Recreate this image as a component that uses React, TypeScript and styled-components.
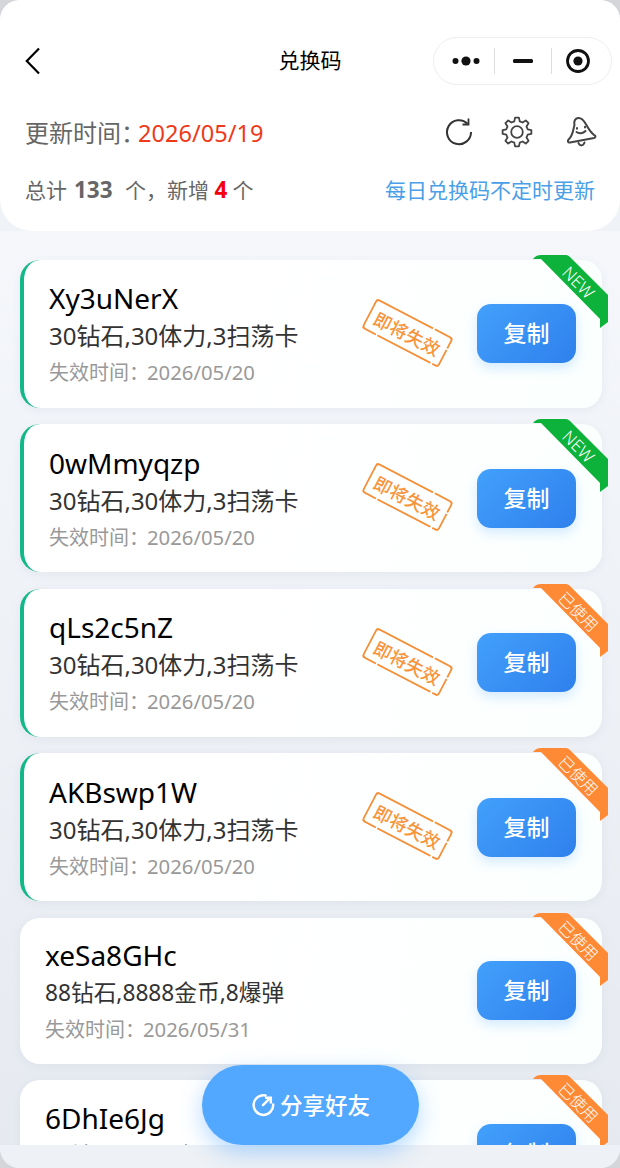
import React from "react";
import styled, { createGlobalStyle } from "styled-components";

const Global = createGlobalStyle`
  html, body { margin: 0; padding: 0; background: #d4d6da; }
  #root { width: 620px; height: 1168px; }
  * { box-sizing: border-box; }
`;

const Screen = styled.div`
  position: relative;
  width: 620px;
  height: 1168px;
  overflow: hidden;
  border-radius: 20px;
  background: #eff2f7;
  display: flex;
  flex-direction: column;
  font-family: "Noto Sans", "Noto Sans CJK SC", sans-serif;
`;

const Header = styled.header`
  flex: none;
  height: 231px;
  background: #fff;
  border-radius: 0 0 32px 32px;
  padding: 37px 8px 0 25px;
`;

const NavBar = styled.div`
  display: flex;
  align-items: center;
  height: 48px;
  position: relative;
`;

const NavTitle = styled.div`
  position: absolute;
  left: -25px;
  right: -8px;
  padding-bottom: 4px;
  text-align: center;
  font-size: 21px;
  color: #000;
`;

const Capsule = styled.div`
  margin-left: auto;
  width: 179px;
  height: 48px;
  border: 1px solid #eeeeee;
  border-radius: 24px;
  display: flex;
  align-items: center;
`;

const CapsuleSlot = styled.div<{ $w: number; $nudge?: number }>`
  width: ${(p) => p.$w}px;
  height: 26px;
  padding-left: ${(p) => p.$nudge ?? 0}px;
  display: flex;
  align-items: center;
  justify-content: center;
  & + & { border-left: 1px solid #dddddd; }
`;

const InfoRow = styled.div`
  display: flex;
  align-items: center;
  justify-content: space-between;
  height: 40px;
  margin-top: 26px;
  padding-right: 15px;
`;

const UpdateText = styled.div`
  font-size: 24px;
  color: #666666;
`;

const DateText = styled.span`
  margin-left: -7px;
  font-size: 23.6px;
  color: #ee3a1b;
`;

const Tools = styled.div`
  display: grid;
  grid-template-columns: 56px 66px 30px;
  align-items: center;
  margin-top: 2px;
`;

const StatRow = styled.div`
  display: flex;
  align-items: center;
  justify-content: space-between;
  height: 34px;
  margin-top: 21px;
  padding-right: 17px;
`;

const StatText = styled.div`
  font-size: 21px;
  color: #666666;
`;

const Num = styled.b<{ $red?: boolean }>`
  font-size: 22.5px;
  margin: ${(p) => (p.$red ? "0 5px 0 0" : "0 7px 0 1.5px")};
  color: ${(p) => (p.$red ? "#f5000f" : "#666666")};
`;

const Note = styled.div`
  font-size: 21px;
  color: #4a9fe8;
`;

const List = styled.div`
  flex: 1;
  min-height: 0;
  overflow: hidden;
  padding: 28.9px 18px 0 20px;
  display: flex;
  flex-direction: column;
  gap: 16.5px;
  background: linear-gradient(#f5f7fb, #e6eaf0);
`;

const Card = styled.div<{ $soon: boolean }>`
  flex: none;
  position: relative;
  height: ${(p) => (p.$soon ? 148 : 146)}px;
  background: linear-gradient(100deg, #ffffff 40%, #fbfffe);
  border-radius: 20px;
  border-left: ${(p) => (p.$soon ? "4px solid #12b886" : "0")};
  padding-left: 25px;
  padding-right: 26px;
  display: flex;
  align-items: center;
  box-shadow: 0 2px 8px rgba(170, 180, 200, 0.16);
`;

const CardInfo = styled.div`
  flex: 1;
  min-width: 0;
  padding-top: 5px;
`;

const Code = styled.div`
  font-size: 28px;
  line-height: 36px;
  margin: -1px 0 2px;
  color: #000;
`;

const Reward = styled.div<{ $soon: boolean }>`
  font-size: ${(p) => (p.$soon ? 24 : 22.7)}px;
  line-height: 36px;
  color: #333333;
`;

const Expire = styled.div`
  font-size: 20px;
  line-height: 36px;
  color: #999999;
`;

const ExpireDate = styled.span`
  margin-left: -2px;
  font-size: 20.3px;
`;

const Stamp = styled.div`
  flex: none;
  position: relative;
  width: 87px;
  height: 34px;
  margin: -2px 26px 0 0;
  transform: rotate(27.5deg);
  display: flex;
  align-items: center;
  justify-content: center;
  font-size: 18px;
  font-weight: 500;
  white-space: nowrap;
  color: #f8953c;
`;

const StampEdge = styled.svg`
  position: absolute;
  left: 0;
  top: 0;
`;

const CopyButton = styled.button`
  flex: none;
  width: 99px;
  height: 59px;
  border: 0;
  border-radius: 14px;
  background: linear-gradient(135deg, #42a0fb, #2f80ec);
  box-shadow: 0 5px 12px rgba(64, 158, 255, 0.22);
  color: #fff;
  font-family: inherit;
  font-size: 23px;
  font-weight: 500;
  padding: 0 0 3px;
`;

const Ribbon = styled.div`
  position: absolute;
  top: -5px;
  right: -6px;
  width: 75px;
  height: 74px;
`;

const RibbonShape = styled.svg`
  position: absolute;
  left: 0;
  top: 0;
`;

const RibbonLabel = styled.div<{ $latin: boolean }>`
  position: absolute;
  left: 46px;
  top: 27px;
  width: 0;
  height: 0;
  display: flex;
  align-items: center;
  justify-content: center;
  transform: rotate(45deg);
  font-size: ${(p) => (p.$latin ? 17 : 16)}px;
  font-weight: 300;
  white-space: nowrap;
  color: #fff;
`;

const BottomBar = styled.div`
  flex: none;
  height: 23px;
  background: #eef1f5;
`;

const ShareButton = styled.button`
  position: absolute;
  left: 202px;
  top: 1065px;
  width: 217px;
  height: 80px;
  border: 0;
  border-radius: 40px;
  background: #52a7fe;
  box-shadow: 0 8px 22px rgba(82, 167, 254, 0.42);
  color: #fff;
  font-family: inherit;
  font-size: 22.5px;
  font-weight: 500;
  display: flex;
  align-items: center;
  justify-content: center;
  gap: 4px;
  padding: 0 0 2px;
`;

const ribbonColor = { new: "#0cb23a", used: "#ff8a35" };

const cards = [
  { code: "Xy3uNerX", reward: "30钻石,30体力,3扫荡卡", date: "2026/05/20", soon: true, tag: "new" as const },
  { code: "0wMmyqzp", reward: "30钻石,30体力,3扫荡卡", date: "2026/05/20", soon: true, tag: "new" as const },
  { code: "qLs2c5nZ", reward: "30钻石,30体力,3扫荡卡", date: "2026/05/20", soon: true, tag: "used" as const },
  { code: "AKBswp1W", reward: "30钻石,30体力,3扫荡卡", date: "2026/05/20", soon: true, tag: "used" as const },
  { code: "xeSa8GHc", reward: "88钻石,8888金币,8爆弹", date: "2026/05/31", soon: false, tag: "used" as const },
  { code: "6DhIe6Jg", reward: "88钻石,8888金币,8爆弹", date: "2026/05/31", soon: false, tag: "used" as const },
];

function gearPath(cx: number, cy: number, outer: number, inner: number, teeth: number) {
  const pts: string[] = [];
  const step = (Math.PI * 2) / teeth;
  for (let i = 0; i < teeth; i++) {
    const a = i * step - Math.PI / 2;
    const offsets: [number, number][] = [
      [-0.32, inner],
      [-0.17, outer],
      [0.17, outer],
      [0.32, inner],
    ];
    for (const [o, r] of offsets) {
      const t = a + o * step;
      pts.push(`${(cx + r * Math.cos(t)).toFixed(2)} ${(cy + r * Math.sin(t)).toFixed(2)}`);
    }
  }
  return `M${pts.join("L")}Z`;
}

function App() {
  return (
    <Screen>
      <Global />
      <Header>
        <NavBar>
          <svg width="16" height="28" viewBox="0 0 16 28" fill="none" stroke="#000" strokeWidth="2.2">
            <path d="M14 1.5 1.8 14 14 26.5" />
          </svg>
          <NavTitle>兑换码</NavTitle>
          <Capsule>
            <CapsuleSlot $w={60} $nudge={4}>
              <svg width="28" height="12" viewBox="0 0 28 12" fill="#111">
                <circle cx="3.5" cy="6" r="3" />
                <circle cx="14" cy="6" r="4.6" />
                <circle cx="24.5" cy="6" r="3" />
              </svg>
            </CapsuleSlot>
            <CapsuleSlot $w={57}>
              <svg width="22" height="6" viewBox="0 0 22 6" fill="#111">
                <rect x="1" y="1" width="20" height="4" rx="1.5" />
              </svg>
            </CapsuleSlot>
            <CapsuleSlot $w={52}>
              <svg width="26" height="26" viewBox="0 0 26 26">
                <circle cx="13" cy="13" r="10.5" fill="none" stroke="#111" strokeWidth="2.8" />
                <circle cx="13" cy="13" r="4.6" fill="#111" />
              </svg>
            </CapsuleSlot>
          </Capsule>
        </NavBar>
        <InfoRow>
          <UpdateText>
            {"更新时间\uFF1A"}
            <DateText>2026/05/19</DateText>
          </UpdateText>
          <Tools>
            <svg width="28" height="28" viewBox="0 0 28 28" fill="none" stroke="#333" strokeWidth="2">
              <path d="M22.6 5.8A12 12 0 1 0 26 14" />
              <path d="M23.5 0.5V6.5H17.5" strokeWidth="1.8" />
            </svg>
            <svg width="32" height="32" viewBox="0 0 32 32" fill="none" stroke="#444" strokeWidth="1.8" strokeLinejoin="round">
              <path d={gearPath(16, 16, 14.5, 11, 8)} />
              <circle cx="16" cy="16" r="5.8" />
            </svg>
            <svg width="30" height="32" viewBox="0 0 30 32" fill="none" stroke="#444" strokeWidth="2" strokeLinecap="round" strokeLinejoin="round">
              <path d="M11 2C7 3 7 6.500 7.500 9 6 14 6 19 2 23 0 25 1 27 3 26.500L27 22C29 21.500 29 19.500 27 19 23 16 21 12 18.500 7.500 16.500 4 14.500 1.500 11 2Z" />
              <path d="M11.500 27c1 3 4.500 3.500 6 -.5" />
              <path d="M10 12v.8M18 10.800v.8" />
              <path d="M9.500 16c2.500 2 6.500 1.500 9-1" />
            </svg>
          </Tools>
        </InfoRow>
        <StatRow>
          <StatText>
            总计 <Num>133</Num> {"个\uFF0C新增 "}
            <Num $red>4</Num>个
          </StatText>
          <Note>每日兑换码不定时更新</Note>
        </StatRow>
      </Header>
      <List>
        {cards.map((c) => (
          <Card key={c.code} $soon={c.soon}>
            <CardInfo>
              <Code>{c.code}</Code>
              <Reward $soon={c.soon}>{c.reward}</Reward>
              <Expire>
                {"失效时间\uFF1A"}
                <ExpireDate>{c.date}</ExpireDate>
              </Expire>
            </CardInfo>
            {c.soon && (
              <Stamp>
                <StampEdge width="87" height="34" viewBox="0 0 87 34" fill="none" stroke="#f5913a" strokeWidth="2">
                  <rect x="1" y="1" width="85" height="32" rx="3" strokeDasharray="60 2 30 1.500 24 2 60 1.500" />
                </StampEdge>
                即将失效
              </Stamp>
            )}
            <CopyButton>复制</CopyButton>
            <Ribbon>
              <RibbonShape width="75" height="74" viewBox="0 0 75 74">
                <path d="M0 4Q3 0 8 0H33Q35 0 37 2L75 40V67L67 73 67 64 8 4Z" fill={ribbonColor[c.tag]} />
              </RibbonShape>
              <RibbonLabel $latin={c.tag === "new"}>{c.tag === "new" ? "NEW" : "已使用"}</RibbonLabel>
            </Ribbon>
          </Card>
        ))}
      </List>
      <BottomBar />
      <ShareButton>
        <svg width="25" height="25" viewBox="0 0 24 24" fill="none" stroke="#fff" strokeWidth="2.4" strokeLinecap="round">
          <path d="M14 3.400A9.400 9.400 0 1 0 21.300 12" />
          <path d="M11.500 12.500 17.500 6.500" />
          <path d="M14.500 5.500H19V10" />
        </svg>
        分享好友
      </ShareButton>
    </Screen>
  );
}

export default App;
